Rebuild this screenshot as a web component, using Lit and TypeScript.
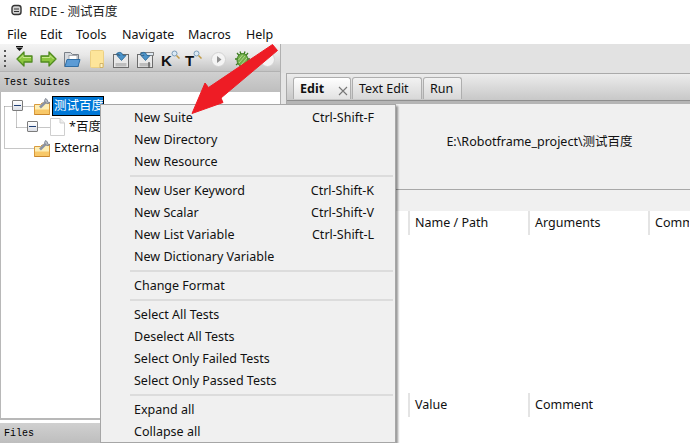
import { LitElement, html, css, svg } from "lit";
import { customElement } from "lit/decorators.js";

const folderIcon = html`<svg class="ticon" width="17" height="18" viewBox="0 0 17 18">
  <path d="M.5 7.500h6l1.500-1.500h7.500v11.500H.5z" fill="#fdeeb5" stroke="#d99a3c"/>
  <path d="M1 12.500h14v4.500H1z" fill="#f8c868"/>
  <path d="M.5 17.500h15" stroke="#c9862c"/>
  <path d="M6 10.500l6-6" stroke="#8b93a3" stroke-width="2.600"/>
  <path d="M11.500 1.500a3 3 0 1 0 4.500 4l-2.300-.4-.4-2.300z" fill="#b9bec8" stroke="#767c88" stroke-width=".8"/>
</svg>`;

const pageIcon = html`<svg class="ticon" width="15" height="18" viewBox="0 0 15 18">
  <path d="M.5.500h9.500l4.500 4.500v12.500H.5z" fill="#fff" stroke="#cfcfcf"/>
  <path d="M10 .5v4.500h4.500" fill="#eee" stroke="#cfcfcf"/>
</svg>`;

const arrowGreen = (flip: boolean) => html`<svg class=${flip ? "flip" : ""} width="17" height="16" viewBox="0 0 17 16">
  <path d="M1 8l7-7v4h8v6H8v4z" fill="#8cc63f" stroke="#4f8a1f" stroke-width="1.300" stroke-linejoin="round"/>
  <path d="M3.500 8l3.500-3.500v2h8" fill="none" stroke="#c8e88e"/>
</svg>`;

const saveIcon = (extra: boolean) => html`<svg width="17" height="17" viewBox="0 0 17 17">
  <rect x=".5" y="3.500" width="15" height="13" fill="#e9e9e9" stroke="#6c6c6c"/>
  <rect x="2.500" y="12" width="11" height="3.500" fill="#bdbdbd"/>
  ${extra ? svg`<rect x="4" y="1.500" width="12.500" height="3" fill="#dfe9f2" stroke="#6c6c6c" stroke-width=".8"/><path d="M12 11v5.500" stroke="#333"/>` : ""}
  <path d="M3 3.500c2-3 6-3 7 1h3l-4.500 5-4.500-5h3c-.6-1.300-2.500-2-4-1z" fill="#4c93c9" stroke="#27628f" stroke-width=".8"/>
</svg>`;

const magnifierLetter = (l: string) => html`<span class="letter">${l}<svg width="9" height="10" viewBox="0 0 9 10">
  <circle cx="3.500" cy="3.500" r="2.500" fill="#dbeaf5" stroke="#7b9cb8"/>
  <path d="M5.500 5.500l3 3" stroke="#c09a45" stroke-width="1.500"/>
</svg></span>`;

const roundIcon = (play: boolean) => html`<svg width="15" height="15" viewBox="0 0 15 15">
  <circle cx="7.500" cy="7.500" r="7" fill="#f4f4f4" stroke="#d2d2d2"/>
  ${play ? svg`<path d="M6 4l4.500 3.500L6 11z" fill="#8f8f8f"/>` : ""}
</svg>`;

const bugIcon = html`<svg width="17" height="18" viewBox="0 0 17 18">
  <path d="M3 3l2.500 3M14 3l-2.500 3M1 9h3M16 9h-3M2 15l3-2.500M15 15l-3-2.500M6 1.500l1 3M11 1.500l-1 3" stroke="#3e7d22" stroke-width="1.300"/>
  <ellipse cx="8.500" cy="10" rx="5.500" ry="6.500" fill="#72b04a" stroke="#3e7d22"/>
  <path d="M5 13l6-7M7 15l6-7M4.500 10l4-5" stroke="#b4d68f"/>
</svg>`;

const MENU: (null | [string, string?])[] = [
  ["New Suite", "Ctrl-Shift-F"],
  ["New Directory"],
  ["New Resource"],
  null,
  ["New User Keyword", "Ctrl-Shift-K"],
  ["New Scalar", "Ctrl-Shift-V"],
  ["New List Variable", "Ctrl-Shift-L"],
  ["New Dictionary Variable"],
  null,
  ["Change Format"],
  null,
  ["Select All Tests"],
  ["Deselect All Tests"],
  ["Select Only Failed Tests"],
  ["Select Only Passed Tests"],
  null,
  ["Expand all"],
  ["Collapse all"],
];

@customElement("app-root")
export class AppRoot extends LitElement {
  static styles = css`
    :host {
      display: flex;
      flex-direction: column;
      position: relative;
      width: 690px;
      height: 443px;
      overflow: hidden;
      background: #fff;
      color: #111;
      font: 12.5px "Noto Sans", "Noto Sans CJK SC", sans-serif;
    }
    .title {
      height: 20px;
      display: flex;
      align-items: center;
      gap: 7px;
      padding-left: 11px;
      box-sizing: border-box;
      color: #222;
      flex: none;
    }
    .menubar {
      height: 24px;
      display: grid;
      grid-template-columns: 33px 36px 46px 66px 58px auto;
      justify-content: start;
      align-items: center;
      padding: 4px 0 0 7px;
      box-sizing: border-box;
      flex: none;
    }
    .main {
      flex: 1;
      display: flex;
      min-height: 0;
    }
    .left {
      width: 281px;
      box-sizing: border-box;
      border-right: 1px solid #b0b0b0;
      display: flex;
      flex-direction: column;
      flex: none;
    }
    .toolbar {
      height: 28px;
      flex: none;
      position: relative;
      display: flex;
      align-items: center;
      padding: 3px 0 0 4px;
      box-sizing: border-box;
      background: linear-gradient(#f4f4f4, #e8e8e8 40%, #c4c4c4);
      border-bottom: 1px solid #b2b2b2;
    }
    .toolbar > * { flex: none; }
    .grip {
      width: 2px;
      height: 18px;
      margin-right: 10px;
      background: repeating-linear-gradient(#555 0 2px, transparent 2px 5px);
    }
    .drop {
      position: absolute;
      left: 15px;
      top: 2px;
      width: 9px;
      height: 5px;
    }
    .tools { display: flex; align-items: center; gap: 7px; }
    .flip { transform: scaleX(-1); }
    .gap1 { margin-left: 1px; display: inline-flex; }
    .gap2 { margin-left: 2px; display: inline-flex; }
    .letter {
      width: 17px;
      height: 17px;
      display: inline-flex;
      font: bold 15px/17px "Liberation Sans", sans-serif;
      color: #111;
      position: relative;
      top: 1px;
    }
    .letter svg { margin-left: -1px; margin-top: -2px; flex: none; }
    .paneHead {
      height: 20px;
      flex: none;
      display: flex;
      align-items: center;
      padding: 1px 0 0 4px;
      box-sizing: border-box;
      font: 10px "Liberation Mono", monospace;
      color: #000;
      background: linear-gradient(#d0d0d0, #bebebe);
    }
    .tree {
      flex: 1;
      background: #fff;
      position: relative;
      padding-top: 3px;
      border-bottom: 2px solid #b8b8b8;
      margin-bottom: 3px;
      box-shadow: inset 1px 0 #b8b8b8;
    }
    .lines { position: absolute; left: 0; top: 0; }
    .row {
      height: 21px;
      display: flex;
      align-items: center;
      position: relative;
      white-space: nowrap;
    }
    .r1 { padding-left: 34px; }
    .r2 { padding-left: 50px; }
    .r3 { padding-left: 34px; }
    .row .label { margin-left: 1px; padding: 0 2px; line-height: 20px; }
    .r2 .label { margin-left: 2px; }
    .sel {
      background: #0078d7;
      color: #fff;
      outline: 1px solid #000;
      outline-offset: -1px;
      width: 48px;
      overflow: hidden;
    }
    .box {
      position: absolute;
      width: 9px;
      height: 9px;
      background: linear-gradient(#fff, #dcdfe6);
      border: 1px solid #7c7c7c;
      border-radius: 1px;
      top: 5px;
    }
    .box::after {
      content: "";
      position: absolute;
      left: 1px;
      right: 1px;
      top: 4px;
      height: 1px;
      background: #1f3f77;
    }
    .b1 { left: 12px; }
    .b2 { left: 27px; }
    .right {
      flex: 1;
      display: flex;
      flex-direction: column;
      min-width: 0;
      background: #e6e6e6;
    }
    .rtop { height: 29px; flex: none; background: #e2e2e2; }
    .book {
      flex: 1;
      margin-left: 5px;
      display: flex;
      flex-direction: column;
      border-left: 1px solid #aaa;
      border-top: 1px solid #aaa;
      min-height: 0;
    }
    .tabs {
      height: 26px;
      flex: none;
      display: flex;
      align-items: flex-end;
      padding: 0 0 1px 6px;
      gap: 1px;
      box-sizing: border-box;
      background: linear-gradient(#ececec, #c8c8c8);
    }
    .tab {
      height: 22px;
      box-sizing: border-box;
      border: 1px solid #aeaeae;
      border-bottom: none;
      border-radius: 3px 3px 0 0;
      display: flex;
      align-items: center;
      padding-left: 6px;
      background: linear-gradient(#f2f2f2, #d8d8d8);
    }
    .tab.active {
      width: 58px;
      background: linear-gradient(#fff, #e2e2e2);
      font-weight: 700;
      position: relative;
    }
    .tab.active svg { position: absolute; left: 44px; top: 8px; }
    .tab.t2 { width: 70px; }
    .tab.t3 { width: 39px; }
    .rule {
      height: 4px;
      flex: none;
      background: #b5b5b5;
      border-top: 1px solid #8f8f8f;
      box-sizing: border-box;
    }
    .info {
      height: 86px;
      flex: none;
      box-sizing: border-box;
      background: #f0f0f0;
      border-bottom: 1px solid #a8a8a8;
      display: flex;
      justify-content: center;
      padding: 28px 0 0 0;
    }
    .path { margin-left: 102px; line-height: 20px; }
    .strip { height: 21px; flex: none; background: #f0f0f0; }
    .grid { flex: 1; background: #fff; position: relative; min-height: 0; overflow: hidden; }
    .head {
      height: 24px;
      display: flex;
      padding-left: 121px;
    }
    .cell {
      width: 120px;
      flex: none;
      box-sizing: border-box;
      border-left: 2px solid #e4e4e4;
      padding-left: 5px;
      line-height: 24px;
      white-space: nowrap;
    }
    .cell.last { width: 41px; overflow: hidden; }
    .head.second { margin-top: 158px; }
    .menu {
      position: absolute;
      left: 100px;
      top: 104px;
      width: 296px;
      box-sizing: border-box;
      padding: 1px 0 0;
      background: #f0f0f0;
      border: 1px solid #a6a6a6;
      box-shadow: 2px 2px 2px rgba(0, 0, 0, 0.4);
    }
    .item {
      height: 22px;
      display: flex;
      justify-content: space-between;
      align-items: center;
      padding: 0 21px 0 33px;
      white-space: nowrap;
    }
    .sep {
      height: 7px;
      display: flex;
      align-items: center;
      padding: 0 2px 0 29px;
    }
    .sep::after { content: ""; flex: 1; height: 2px; background: #dcdcdc; }
    .arrow { position: absolute; left: 0; top: 0; pointer-events: none; }
  `;

  render() {
    return html`
      <div class="title">
        <svg width="11" height="12" viewBox="0 0 11 12">
          <rect x="1" y="1.500" width="9" height="9" rx="2.500" fill="#d4d4d4" stroke="#333" stroke-width="1.400"/>
          <path d="M3 5h5M3 7.500h5" stroke="#333" stroke-width="1.200"/>
        </svg>
        <span>RIDE - 测试百度</span>
      </div>
      <div class="menubar">
        ${["File", "Edit", "Tools", "Navigate", "Macros", "Help"].map((m) => html`<span>${m}</span>`)}
      </div>
      <div class="main">
        <div class="left">
          <div class="toolbar">
            <div class="grip"></div>
            <svg class="drop" viewBox="0 0 9 5"><path d="M1 .5h7" stroke="#111"/><path d="M1 1.500h7L4.500 5z" fill="#111"/></svg>
            <div class="tools">
              ${arrowGreen(false)} ${arrowGreen(true)}
              <svg width="17" height="17" viewBox="0 0 17 17">
                <path d="M.5 15.500V1.500h6l2 2h6v12z" fill="#d6d9dd" stroke="#7a8088"/>
                <rect x="5" y="4.500" width="8" height="4" fill="#fff" stroke="#8a8f96" stroke-width=".7"/>
                <path d="M1 15.500l2-7h13l-2 7z" fill="#5b9bd5" stroke="#2f6ea5"/>
              </svg>
              <svg class="gap2" width="14" height="18" viewBox="0 0 14 18">
                <path d="M.5 1.500q0-1 1-1h11q1 0 1 1v15q0 1-1 1h-11q-1 0-1-1z" fill="#fde59a" stroke="#ecd083"/>
                <path d="M10 13.500h3v4h-3z" fill="#fff3c4" stroke="#c9a85e" stroke-width=".8"/>
              </svg>
              <span class="gap2">${saveIcon(false)}</span>
              ${saveIcon(true)} ${magnifierLetter("K")} ${magnifierLetter("T")}
              <span class="gap2">${roundIcon(true)}</span>
              <span class="gap1">${bugIcon}</span>
              <span class="gap2">${roundIcon(false)}</span>
            </div>
          </div>
          <div class="paneHead">Test Suites</div>
          <div class="tree">
            <svg class="lines" width="120" height="80" viewBox="0 0 120 80">
              <path d="M4.500 14.500h30M4.500 14.500v42M4.500 56.500h30M16.500 14.500v21M16.500 35.500h34" fill="none" stroke="#8c8c8c" stroke-dasharray="1 1"/>
            </svg>
            <div class="row r1"><span class="box b1"></span>${folderIcon}<span class="label sel">测试百度</span></div>
            <div class="row r2"><span class="box b2"></span>${pageIcon}<span class="label">*百度</span></div>
            <div class="row r3">${folderIcon}<span class="label">External</span></div>
          </div>
          <div class="paneHead">Files</div>
        </div>
        <div class="right">
          <div class="rtop"></div>
          <div class="book">
            <div class="tabs">
              <div class="tab active">Edit
                <svg width="10" height="10" viewBox="0 0 10 10"><path d="M1 1l8 8M9 1l-8 8" stroke="#777" stroke-width="1.100"/></svg>
              </div>
              <div class="tab t2">Text Edit</div>
              <div class="tab t3">Run</div>
            </div>
            <div class="rule"></div>
            <div class="info"><span class="path">E:\\Robotframe_project\\测试百度</span></div>
            <div class="strip"></div>
            <div class="grid">
              <div class="head">
                <div class="cell">Name / Path</div><div class="cell">Arguments</div><div class="cell last">Comment</div>
              </div>
              <div class="head second">
                <div class="cell">Value</div><div class="cell">Comment</div>
              </div>
            </div>
          </div>
        </div>
      </div>
      <div class="menu">
        ${MENU.map((m) =>
          m
            ? html`<div class="item"><span>${m[0]}</span>${m[1] ? html`<span>${m[1]}</span>` : ""}</div>`
            : html`<div class="sep"></div>`
        )}
      </div>
      <svg class="arrow" width="690" height="443" viewBox="0 0 690 443">
        <path d="M272.500 44.500l5 6L221 98l2 4.500-31 11 13-30.500 3.500 4.500z" fill="#ee1c25" stroke="#ee1c25" stroke-linejoin="round"/>
      </svg>
    `;
  }
}
